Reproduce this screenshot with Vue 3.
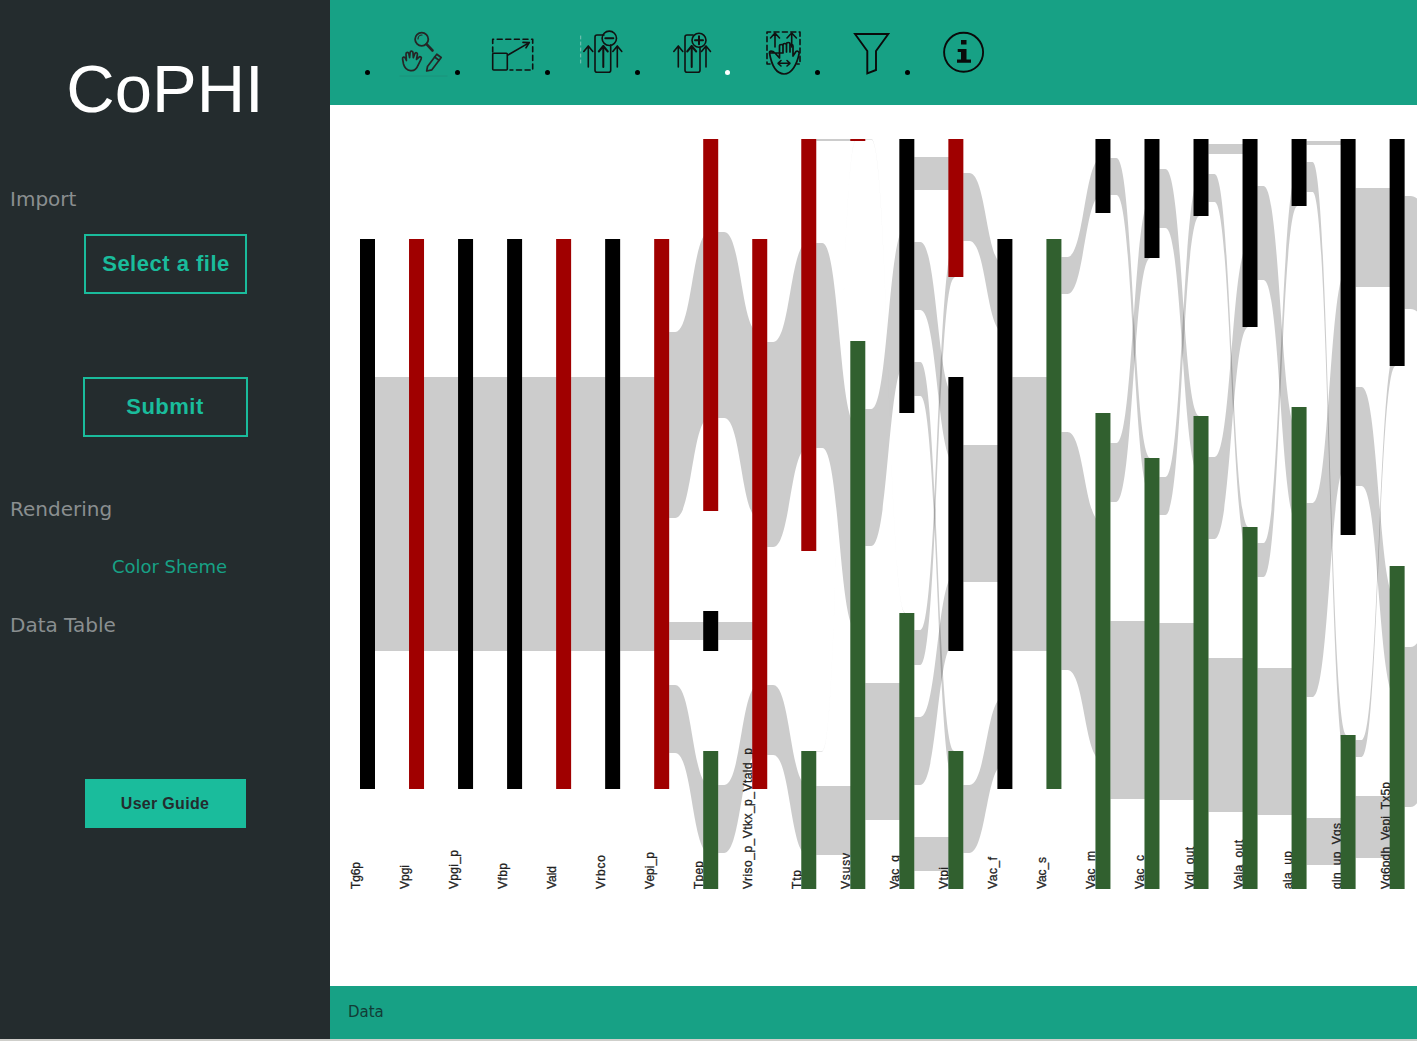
<script setup>
const colX = i => 360 + 49.03 * i
const NODE = { k: '#000000', r: '#a00000', g: '#31602f' }

const columns = [
  { label: 'Tg6p', len: 27, nodes: [['k', 239, 789]] },
  { label: 'Vpgi', len: 24, nodes: [['r', 239, 789]] },
  { label: 'Vpgi_p', len: 39, nodes: [['k', 239, 789]] },
  { label: 'Vfbp', len: 26, nodes: [['k', 239, 789]] },
  { label: 'Vald', len: 23, nodes: [['r', 239, 789]] },
  { label: 'Vrbco', len: 34, nodes: [['k', 239, 789]] },
  { label: 'Vepi_p', len: 37, nodes: [['r', 239, 789]] },
  { label: 'Tpep', len: 28, nodes: [['r', 139, 511], ['k', 611, 651], ['g', 751, 889]] },
  { label: 'Vriso_p_Vtkx_p_Vtald_p', len: 141, nodes: [['r', 239, 789]] },
  { label: 'Ttp', len: 19, nodes: [['r', 139, 551], ['g', 751, 889]] },
  { label: 'Vsusv', len: 36, nodes: [['r', 139, 141], ['g', 341, 889]] },
  { label: 'Vac_g', len: 34, nodes: [['k', 139, 413], ['g', 613, 889]] },
  { label: 'Vtpi', len: 22, nodes: [['r', 139, 277], ['k', 377, 651], ['g', 751, 889]] },
  { label: 'Vac_f', len: 32, nodes: [['k', 239, 789]] },
  { label: 'Vac_s', len: 32, nodes: [['g', 239, 789]] },
  { label: 'Vac_m', len: 38, nodes: [['k', 139, 213], ['g', 413, 889]] },
  { label: 'Vac_c', len: 34, nodes: [['k', 139, 258], ['g', 458, 889]] },
  { label: 'Vgl_out', len: 42, nodes: [['k', 139, 216], ['g', 416, 889]] },
  { label: 'Vala_out', len: 49, nodes: [['k', 139, 327], ['g', 527, 889]] },
  { label: 'ala_up', len: 38, nodes: [['k', 139, 206], ['g', 407, 889]] },
  { label: 'gln_up_Vgs', len: 66, nodes: [['k', 139, 535], ['g', 735, 889]] },
  { label: 'Vg6pdh_Vepi_Tx5p', len: 107, nodes: [['k', 139, 366], ['g', 566, 889]] }
]

// source column, y at source, y at target, thickness
const flows = [
  [0, 377, 377, 274], [1, 377, 377, 274], [2, 377, 377, 274],
  [3, 377, 377, 274], [4, 377, 377, 274], [5, 377, 377, 274],
  [6, 332, 232, 186], [6, 622, 622, 18], [6, 685, 785, 68],
  [7, 232, 332, 186], [7, 622, 622, 18], [7, 785, 685, 68],
  [8, 342, 243, 205], [8, 685, 785, 70],
  [9, 243, 425, 205], [9, 139, 139, 2], [9, 786, 786, 69], [9, 751, 139, 0.4],
  [10, 409, 227, 137], [10, 683, 683, 137], [10, 139, 613, 0.4],
  [11, 157, 157, 33], [11, 242, 395, 68], [11, 362, 751, 34],
  [11, 630, 243, 35], [11, 717, 575, 68], [11, 837, 837, 34],
  [12, 173, 264, 68], [12, 445, 445, 137], [12, 785, 697, 68],
  [13, 377, 377, 274],
  [14, 257, 158, 37], [14, 432, 522, 238],
  [15, 158, 458, 37], [15, 443, 199, 59], [15, 621, 621, 178],
  [16, 169, 416, 59], [16, 477, 178, 38], [16, 623, 623, 177],
  [17, 144, 144, 10], [17, 174, 527, 28], [17, 457, 245, 82], [17, 658, 658, 154],
  [18, 186, 430, 94], [18, 543, 172, 34], [18, 668, 668, 147],
  [19, 141, 141, 4], [19, 162, 735, 30], [19, 503, 270, 194], [19, 818, 818, 47],
  [20, 188, 188, 99], [20, 387, 598, 99], [20, 740, 349, 17], [20, 796, 796, 62],
  [21, 196, 240, 113], [21, 647, 580, 160]
]

const SHIFT = 6
const ribbons = flows.map(([i, a, b, h]) => {
  const x0 = colX(i) + 15
  const s = x0 + SHIFT
  const e = colX(i + 1) + SHIFT
  const m = (s + e) / 2
  return `M${x0} ${a}L${s} ${a}C${m} ${a} ${m} ${b} ${e} ${b}L${e} ${b + h}C${m} ${b + h} ${m} ${a + h} ${s} ${a + h}L${x0} ${a + h}Z`
})

const bars = columns.flatMap((c, i) =>
  c.nodes.map(([tone, top, bottom]) => ({
    x: colX(i), y: top, h: bottom - top, fill: NODE[tone]
  }))
)
const labels = columns.map((c, i) => ({ text: c.label, len: c.len, x: colX(i) }))

const arrow = (x, top = 46, bottom = 67) =>
  `M${x} ${bottom}V${top}M${x - 4.5} ${top + 5.5}L${x} ${top}L${x + 4.5} ${top + 5.5}`
</script>

<template>
  <div class="shell">
    <aside class="side">
      <h1 class="brand">CoPHI</h1>
      <h2 class="heading heading-import">Import</h2>
      <button class="outline outline-file">Select a file</button>
      <button class="outline outline-submit">Submit</button>
      <h2 class="heading heading-render">Rendering</h2>
      <a class="scheme">Color Sheme</a>
      <h2 class="heading heading-table">Data Table</h2>
      <button class="guide">User Guide</button>
    </aside>

    <main class="main">
      <header class="bar">
        <div class="tool">
          <i class="dot"></i>
          <svg class="icon" viewBox="395 25 60 55" fill="none" stroke="#262626" stroke-width="1.7" stroke-linecap="round" stroke-linejoin="round">
            <path d="M400 76H447" stroke="#1f8f78" stroke-width=".8" />
            <circle cx="421.7" cy="39.3" r="6.6" stroke-width="1.8" />
            <path d="M418 39a4 4 0 0 1 4-4" stroke-width="1.2" />
            <path d="M426.5 44.2L432.5 50.5" stroke-width="2.6" />
            <path d="M410.500 70.700c-3.500-.4-6-3-7-6.700l-.9-5c-.4-2 1.900-2.600 2.800-.8l1 2.300-.4-6.500c-.1-2 2.400-2.300 2.800-.3l.8 4 .5-5.200c.2-2 2.800-1.900 2.900.1l.3 5 1.500-3.900c.7-1.800 3-1.100 2.600.8l-.9 5 2.300-2.200c1.400-1.300 3.200 0 2.300 1.800l-2.600 5.200c-1.500 3.600-3.200 6.800-7.500 6.400z" />
            <path d="M427.500 66.500l9.300-12.300 4.400 3.300-9.300 12.300-5.200 1.200z" />
            <path d="M434.600 57l4.400 3.300" />
          </svg>
        </div>
        <div class="tool">
          <i class="dot"></i>
          <svg class="icon" viewBox="485 25 60 55" fill="none" stroke="#111" stroke-width="1.6" stroke-linecap="round" stroke-linejoin="round">
            <path d="M492.700 52V39.300H532.700V70H510" stroke-dasharray="5 3.600" />
            <rect x="492.700" y="53.300" width="14.600" height="16.700" rx="1" />
            <path d="M508 55L529.300 42.600M523 42.400L529.300 42.600L526 47.800" />
          </svg>
        </div>
        <div class="tool">
          <i class="dot"></i>
          <svg class="icon" viewBox="575 25 60 55" fill="none" stroke="#111" stroke-width="1.6" stroke-linecap="round" stroke-linejoin="round">
            <path d="M580.700 36V65" stroke="#7fc4b5" stroke-width="1" stroke-dasharray="3 3" />
            <path d="M603 72.300H597a2 2 0 0 1-2-2V37a2 2 0 0 1 2-2H604M610.700 45V70.300a2 2 0 0 1-2 2H603" />
            <circle cx="609.300" cy="38.300" r="7.200" />
            <path d="M605.300 38.300H613.300" stroke-width="2" />
            <path :d="arrow(588.300)" />
            <path :d="arrow(603.300)" stroke-width="2" />
            <path :d="arrow(617.300)" />
          </svg>
        </div>
        <div class="tool">
          <i class="dot"></i>
          <svg class="icon" viewBox="665 25 60 55" fill="none" stroke="#111" stroke-width="1.6" stroke-linecap="round" stroke-linejoin="round">
            <path d="M692 72.300H687a2 2 0 0 1-2-2V37a2 2 0 0 1 2-2H693M700 47V70.300a2 2 0 0 1-2 2H692" />
            <circle cx="699" cy="40.300" r="7" />
            <path d="M695 40.300H703M699 36.300V44.300" stroke-width="2" />
            <path :d="arrow(678.300)" />
            <path :d="arrow(691.700)" stroke-width="2" />
            <path :d="arrow(706)" />
          </svg>
        </div>
        <div class="tool">
          <i class="dot dot-light"></i>
          <svg class="icon" viewBox="755 25 60 55" fill="none" stroke="#111" stroke-width="1.6" stroke-linecap="round" stroke-linejoin="round">
            <path d="M770 64H767V32H800V64H797" stroke-dasharray="5 3.400" />
            <path d="M775 47V33M770.500 38L775 33L779.500 38M791.700 47V33M787 38L791.700 33L796.400 38" />
            <path d="M769.500 53C771 62 775 73.500 784 74C792 74 797 64 799 54C799.500 51 796.500 50 795 53L793 56V46C793 44 790 44 790 46V52M790 52V44C790 42 786.500 42 786.500 44V52M786.500 52V45C786.500 43 783 43 783 45V53M783 53V46C783 44 779.500 44 779.500 46V58L775 53C772.500 50.500 769 50.500 769.500 53Z" stroke-width="1.7" />
            <path d="M778 63.300H790M781 60.500L778 63.300L781 66M787 60.500L790 63.300L787 66" />
          </svg>
        </div>
        <div class="tool">
          <i class="dot"></i>
          <svg class="icon" viewBox="845 25 60 55" fill="none" stroke="#0a0a0a" stroke-width="1.9" stroke-linejoin="miter">
            <path d="M855 34H888.300L876 51V70L867.300 73.300V51Z" />
          </svg>
        </div>
        <div class="tool">
          <i class="dot"></i>
          <svg class="icon" viewBox="935 25 60 55" fill="none" stroke="#0a0a0a" stroke-width="1.9">
            <circle cx="963.600" cy="52.300" r="19.500" />
            <path d="M961 40H966.500V44.500H961ZM957.700 49H966.500V59.500H971V62.800H957V59.500H961V52H957.700Z" fill="#0a0a0a" stroke="none" />
          </svg>
        </div>
      </header>

      <section class="chart">
        <svg class="sankey" viewBox="330 105 1087 881" width="1087" height="881">
          <path v-for="(d, n) in ribbons" :key="n" :d="d" class="ribbon" />
          <text v-for="l in labels" :key="l.text" class="label" :textLength="l.len" lengthAdjust="spacing" :transform="`translate(${l.x} 889) rotate(-90)`">{{ l.text }}</text>
          <rect v-for="(b, n) in bars" :key="'b' + n" :x="b.x" :y="b.y" width="15" :height="b.h" :fill="b.fill" />
        </svg>
      </section>

      <footer class="foot">Data</footer>
    </main>
  </div>
</template>

<style scoped>
.shell {
  display: flex;
  height: 1039px;
}
.side {
  width: 330px;
  flex: none;
  background: #242c2e;
  display: flex;
  flex-direction: column;
  align-items: flex-start;
}
.brand {
  align-self: center;
  margin: 55px 0 0;
  font: 400 67px/1 "Liberation Sans", sans-serif;
  color: #fff;
  height: 67px;
}
.heading {
  margin: 0 0 0 10px;
  font: 400 20px/24px "DejaVu Sans", sans-serif;
  color: #8a8f90;
}
.heading-import { margin-top: 65px; }
.heading-render { margin-top: 60px; }
.heading-table { margin-top: 34px; }
.outline {
  align-self: center;
  background: transparent;
  border: 2px solid #1abc9c;
  color: #1abc9c;
  font: 700 22px/1 "Liberation Sans", sans-serif;
  letter-spacing: .5px;
  padding: 0;
  box-sizing: border-box;
}
.outline-file {
  width: 163px;
  height: 60px;
  margin-top: 23px;
  padding-left: 2px;
}
.outline-submit {
  width: 165px;
  height: 60px;
  margin-top: 83px;
}
.scheme {
  align-self: center;
  margin: 34px 0 0 9px;
  font: 400 18px/24px "DejaVu Sans", sans-serif;
  color: #17a185;
}
.guide {
  align-self: center;
  width: 161px;
  height: 49px;
  margin-top: 142px;
  padding: 0;
  border: none;
  background: #1abc9c;
  color: #242c2e;
  font: 700 16px/1 "Liberation Sans", sans-serif;
  letter-spacing: .3px;
}
.main {
  flex: 1;
  min-width: 0;
  display: flex;
  flex-direction: column;
  background: #fff;
}
.bar {
  height: 105px;
  flex: none;
  background: #17a185;
  display: flex;
  align-items: flex-start;
  padding-left: 35px;
}
.tool {
  width: 90px;
  flex: none;
  display: flex;
  align-items: flex-start;
  padding-top: 25px;
}
.dot {
  width: 5px;
  height: 5px;
  flex: none;
  margin-top: 45px;
  margin-right: 25px;
  border-radius: 50%;
  background: #000;
}
.dot-light { background: #fff; }
.icon {
  width: 60px;
  height: 55px;
  flex: none;
  display: block;
}
.chart {
  flex: 1;
  min-height: 0;
  overflow: hidden;
}
.sankey { display: block; }
.ribbon {
  fill: #000;
  fill-opacity: .2;
}
.label {
  font: 400 12px "Liberation Sans", sans-serif;
  fill: #222;
  stroke: #222;
  stroke-width: .3px;
}
.foot {
  height: 53px;
  flex: none;
  background: #17a185;
  display: flex;
  align-items: center;
  padding-left: 18px;
  font: 400 15px/1 "DejaVu Sans", sans-serif;
  color: #123c36;
}
</style>

<style>
html, body { background: #cfcfcb; }
body { margin: 0; }
</style>
